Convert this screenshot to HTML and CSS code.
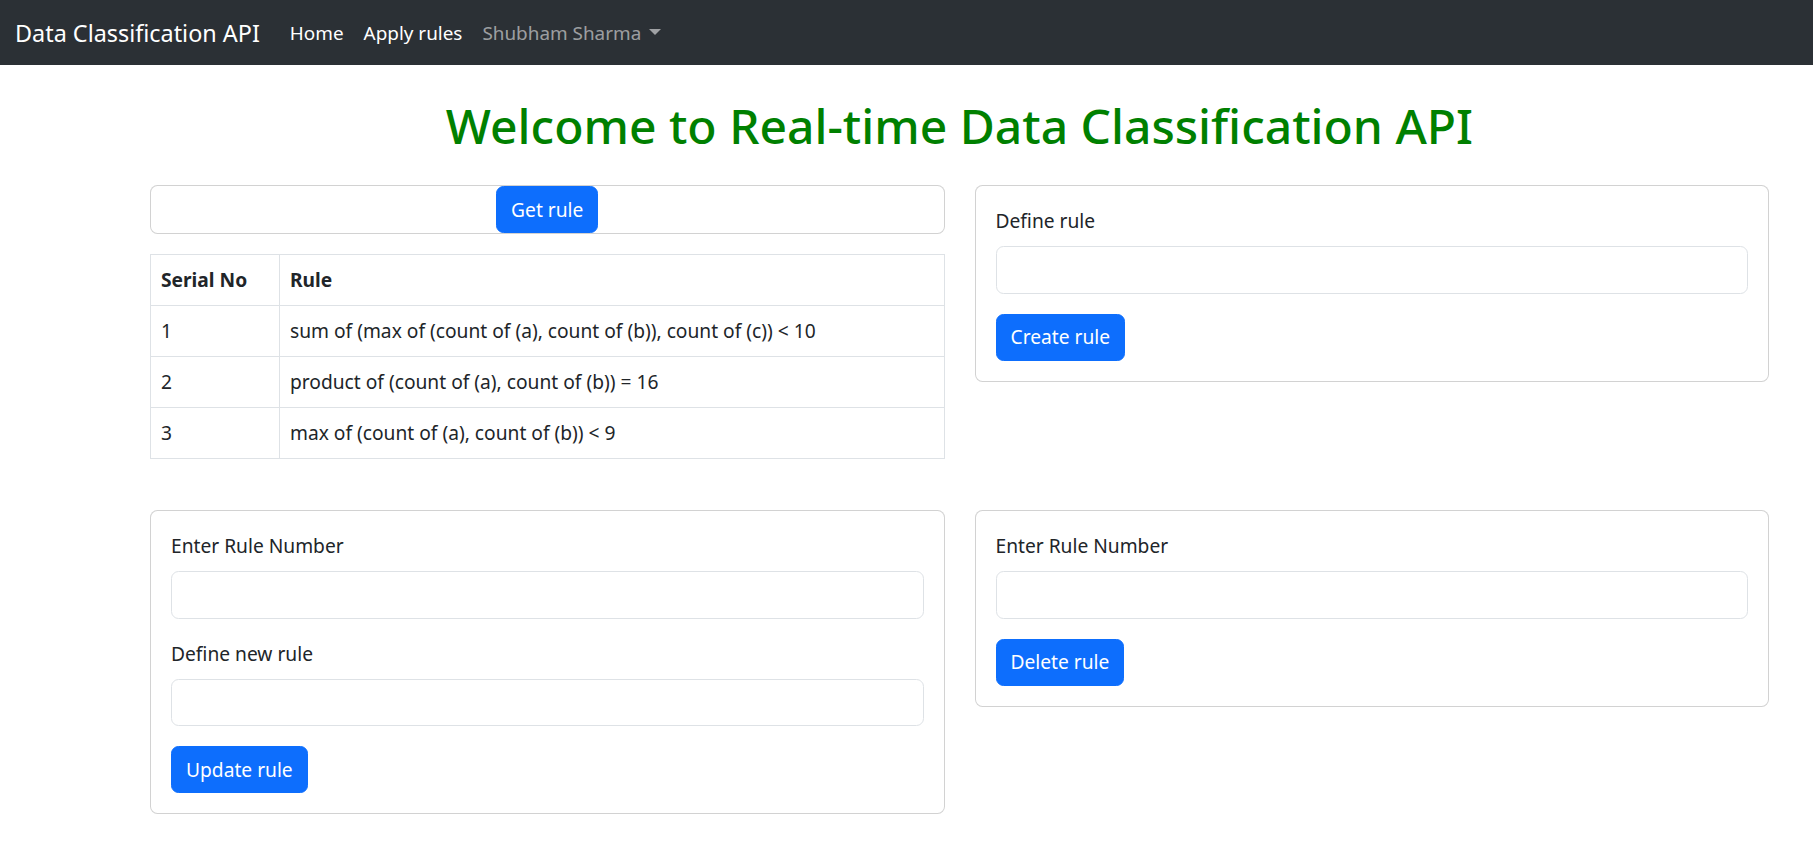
FILE: index.html
```html
<!DOCTYPE html>
<html lang="en">
<head>
<meta charset="utf-8">
<title>Data Classification API</title>
<link rel="stylesheet" href="styles.css">
</head>
<body>
<nav class="navbar">
  <a class="brand" href="#">Data Classification API</a>
  <ul class="nav-links">
    <li><a class="nav-link active" href="#">Home</a></li>
    <li><a class="nav-link active" href="#">Apply rules</a></li>
    <li><a class="nav-link dropdown-toggle" href="#">Shubham Sharma</a></li>
  </ul>
</nav>

<main class="container">
  <h1 class="title">Welcome to Real-time Data Classification API</h1>

  <div class="row">
    <div class="col">
      <div class="card card-center">
        <button class="btn">Get rule</button>
      </div>
      <table class="table">
        <thead>
          <tr><th class="c1">Serial No</th><th>Rule</th></tr>
        </thead>
        <tbody>
          <tr><td class="c1">1</td><td>sum of (max of (count of (a), count of (b)), count of (c)) &lt; 10</td></tr>
          <tr><td class="c1">2</td><td>product of (count of (a), count of (b)) = 16</td></tr>
          <tr><td class="c1">3</td><td>max of (count of (a), count of (b)) &lt; 9</td></tr>
        </tbody>
      </table>
    </div>
    <div class="col">
      <div class="card">
        <div class="card-body">
          <label class="label">Define rule</label>
          <input class="input" type="text">
          <button class="btn">Create rule</button>
        </div>
      </div>
    </div>
  </div>

  <div class="row row-bottom">
    <div class="col">
      <div class="card">
        <div class="card-body">
          <label class="label">Enter Rule Number</label>
          <input class="input" type="text">
          <label class="label">Define new rule</label>
          <input class="input" type="text">
          <button class="btn">Update rule</button>
        </div>
      </div>
    </div>
    <div class="col">
      <div class="card">
        <div class="card-body">
          <label class="label">Enter Rule Number</label>
          <input class="input" type="text">
          <button class="btn">Delete rule</button>
        </div>
      </div>
    </div>
  </div>
</main>
</body>
</html>
```

FILE: styles.css
```css
* { box-sizing: border-box; }

html, body {
  margin: 0;
  padding: 0;
  background: #fff;
}

body {
  font-family: "Noto Sans", "Open Sans", sans-serif;
  font-size: 19.2px;
  line-height: 30px;
  color: #212529;
}

.navbar {
  height: 65px;
  background: #2b3035;
  display: flex;
  align-items: center;
  padding: 0 15px;
}

.brand {
  color: #fff;
  text-decoration: none;
  font-size: 23.4px;
  margin-right: 20px;
}

.nav-links {
  list-style: none;
  margin: 0;
  padding: 0;
  display: flex;
}

.nav-link {
  display: block;
  padding: 10px 10px;
  color: rgba(255, 255, 255, 0.55);
  text-decoration: none;
  font-size: 18.9px;
}

.nav-link.active { color: #fff; }

.dropdown-toggle::after {
  content: "";
  display: inline-block;
  margin-left: 8px;
  vertical-align: 0.255em;
  border-top: 6px solid;
  border-right: 6px solid transparent;
  border-left: 6px solid transparent;
}

.container {
  width: 1649px;
  margin: 0 0 0 135px;
  padding: 0 15px;
}

.title {
  margin: 31px 0 29px;
  text-align: center;
  color: #008000;
  font-size: 48px;
  line-height: 60px;
  font-weight: 500;
}

.row {
  display: flex;
  gap: 30px;
  align-items: flex-start;
}

.row-bottom { margin-top: 51px; }

.col {
  flex: 1 1 0;
  min-width: 0;
}

.card {
  border: 1.25px solid rgba(0, 0, 0, 0.175);
  border-radius: 7.5px;
  background: #fff;
}

.card-center {
  display: flex;
  justify-content: center;
}

.card-body {
  padding: 20px;
  display: flex;
  flex-direction: column;
  align-items: flex-start;
}

.label {
  display: block;
  margin-bottom: 10px;
}

.input {
  display: block;
  width: 100%;
  height: 47.5px;
  margin: 0 0 20px;
  padding: 7.5px 15px;
  font: inherit;
  border: 1.25px solid #dee2e6;
  border-radius: 7.5px;
  background: #fff;
}

.btn {
  font: inherit;
  color: #fff;
  background: #0d6efd;
  border: 1.25px solid #0d6efd;
  border-radius: 7.5px;
  padding: 7.5px 14px;
  line-height: 30px;
  cursor: pointer;
}

.table {
  width: 100%;
  margin-top: 20px;
  border-collapse: collapse;
  border: 1.25px solid #dee2e6;
}

.table th,
.table td {
  border: 1.25px solid #dee2e6;
  padding: 10px;
  text-align: left;
  line-height: 30px;
}

.table th { font-weight: 700; }

.table .c1 { width: 129px; }
```
